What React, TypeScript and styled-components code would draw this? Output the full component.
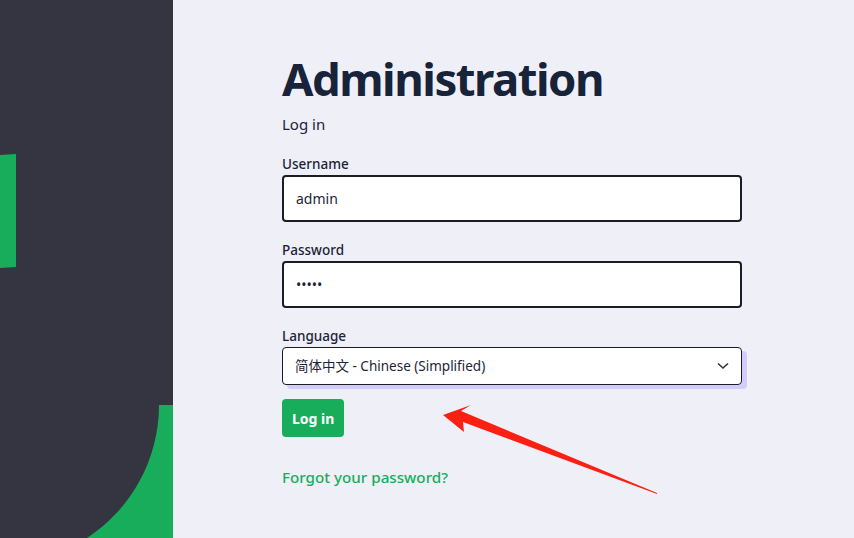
import React from "react";
import styled, { createGlobalStyle } from "styled-components";

const Global = createGlobalStyle`
  html, body { margin: 0; padding: 0; }
  body {
    background: #efeff8;
    font-family: "Noto Sans", "Noto Sans CJK SC", sans-serif;
    color: #1b2537;
  }
`;

const Page = styled.div`
  display: flex;
  height: 538px;
  width: 854px;
  overflow: hidden;
  position: relative;
`;

const Sidebar = styled.div`
  width: 173px;
  flex: 0 0 173px;
  height: 538px;
  background: #343541;
  svg { display: block; }
`;

const Main = styled.main`
  flex: 1;
  padding: 50px 0 0 109px;
  box-sizing: border-box;
`;

const Form = styled.form`
  width: 460px;
  display: flex;
  flex-direction: column;
`;

const Title = styled.h1`
  margin: 0;
  font-size: 45.5px;
  line-height: 56px;
  font-weight: 700;
  letter-spacing: -1.5px;
  color: #172338;
`;

const Subtitle = styled.p`
  margin: 7px 0 20px;
  font-size: 15px;
  line-height: 22px;
  color: #1b2537;
`;

const Field = styled.div<{ $mb?: number }>`
  display: flex;
  flex-direction: column;
  margin-bottom: ${(p) => p.$mb ?? 19}px;
`;

const Label = styled.label`
  font-size: 13.5px;
  line-height: 18px;
  font-weight: 500;
  color: #1b2537;
  margin-bottom: 2px;
`;

const Input = styled.input`
  box-sizing: border-box;
  height: 47px;
  width: 460px;
  border: 2px solid #1c1c22;
  border-radius: 4px;
  background: #fff;
  padding: 0 12px;
  font-family: inherit;
  font-size: 14px;
  color: #1b2537;
  outline: none;
`;

const SelectWrap = styled.div`
  position: relative;
  width: 460px;
  height: 38px;
  box-shadow: 5px 4px 0 #d3ccfa;
  border-radius: 4px;
`;

const Select = styled.select`
  appearance: none;
  -webkit-appearance: none;
  box-sizing: border-box;
  width: 100%;
  height: 38px;
  border: 1px solid #1c1c22;
  border-radius: 4px;
  background: #fff;
  padding: 0 12px;
  font-family: "Noto Sans", "Noto Sans CJK SC", sans-serif;
  font-size: 13.5px;
  color: #1b2537;
  outline: none;
`;

const Chevron = styled.svg`
  position: absolute;
  right: 13px;
  top: 15px;
  pointer-events: none;
`;

const Button = styled.button`
  align-self: flex-start;
  margin-top: 14px;
  height: 38px;
  padding: 0 10px;
  border: none;
  border-radius: 4px;
  background: #17ad5b;
  color: #fff;
  font-family: inherit;
  font-size: 14px;
  font-weight: 700;
`;

const Forgot = styled.a`
  margin-top: 30px;
  font-size: 15.2px;
  line-height: 20px;
  color: #17ad5b;
  text-decoration: none;
  font-weight: 500;
`;

const Arrow = styled.svg`
  position: absolute;
  left: 0;
  top: 0;
  pointer-events: none;
`;

export default function App() {
  return (
    <>
      <Global />
      <Page>
        <Sidebar>
          <svg width="173" height="538" viewBox="0 0 173 538">
            <rect x="0" y="0" width="173" height="538" fill="#343541" />
            <rect x="0" y="405" width="173" height="133" fill="#17ad5b" />
            <path d="M0 0 H159 V405 A159 159 0 0 1 87 538 H0 Z" fill="#343541" />
            <polygon points="0,155 16,154 16,267 0,268" fill="#17ad5b" />
          </svg>
        </Sidebar>
        <Main>
          <Form onSubmit={(e) => e.preventDefault()}>
            <Title>Administration</Title>
            <Subtitle>Log in</Subtitle>
            <Field>
              <Label htmlFor="username">Username</Label>
              <Input id="username" defaultValue="admin" />
            </Field>
            <Field>
              <Label htmlFor="password">Password</Label>
              <Input id="password" type="password" defaultValue="admin" />
            </Field>
            <Field $mb={0}>
              <Label htmlFor="lang">Language</Label>
              <SelectWrap>
                <Select id="lang" defaultValue="zh">
                  <option value="zh">简体中文 - Chinese (Simplified)</option>
                </Select>
                <Chevron width="12" height="8" viewBox="0 0 12 8">
                  <path d="M1 1.5 L6 6 L11 1.5" fill="none" stroke="#333" strokeWidth="1.6" />
                </Chevron>
              </SelectWrap>
            </Field>
            <Button type="submit">Log in</Button>
            <Forgot href="#">Forgot your password?</Forgot>
          </Form>
        </Main>
        <Arrow width="854" height="538" viewBox="0 0 854 538">
          <polygon points="657,493 461,411 471,405 443,415 464,432 463,422 657,494" fill="#fb2012" />
        </Arrow>
      </Page>
    </>
  );
}
